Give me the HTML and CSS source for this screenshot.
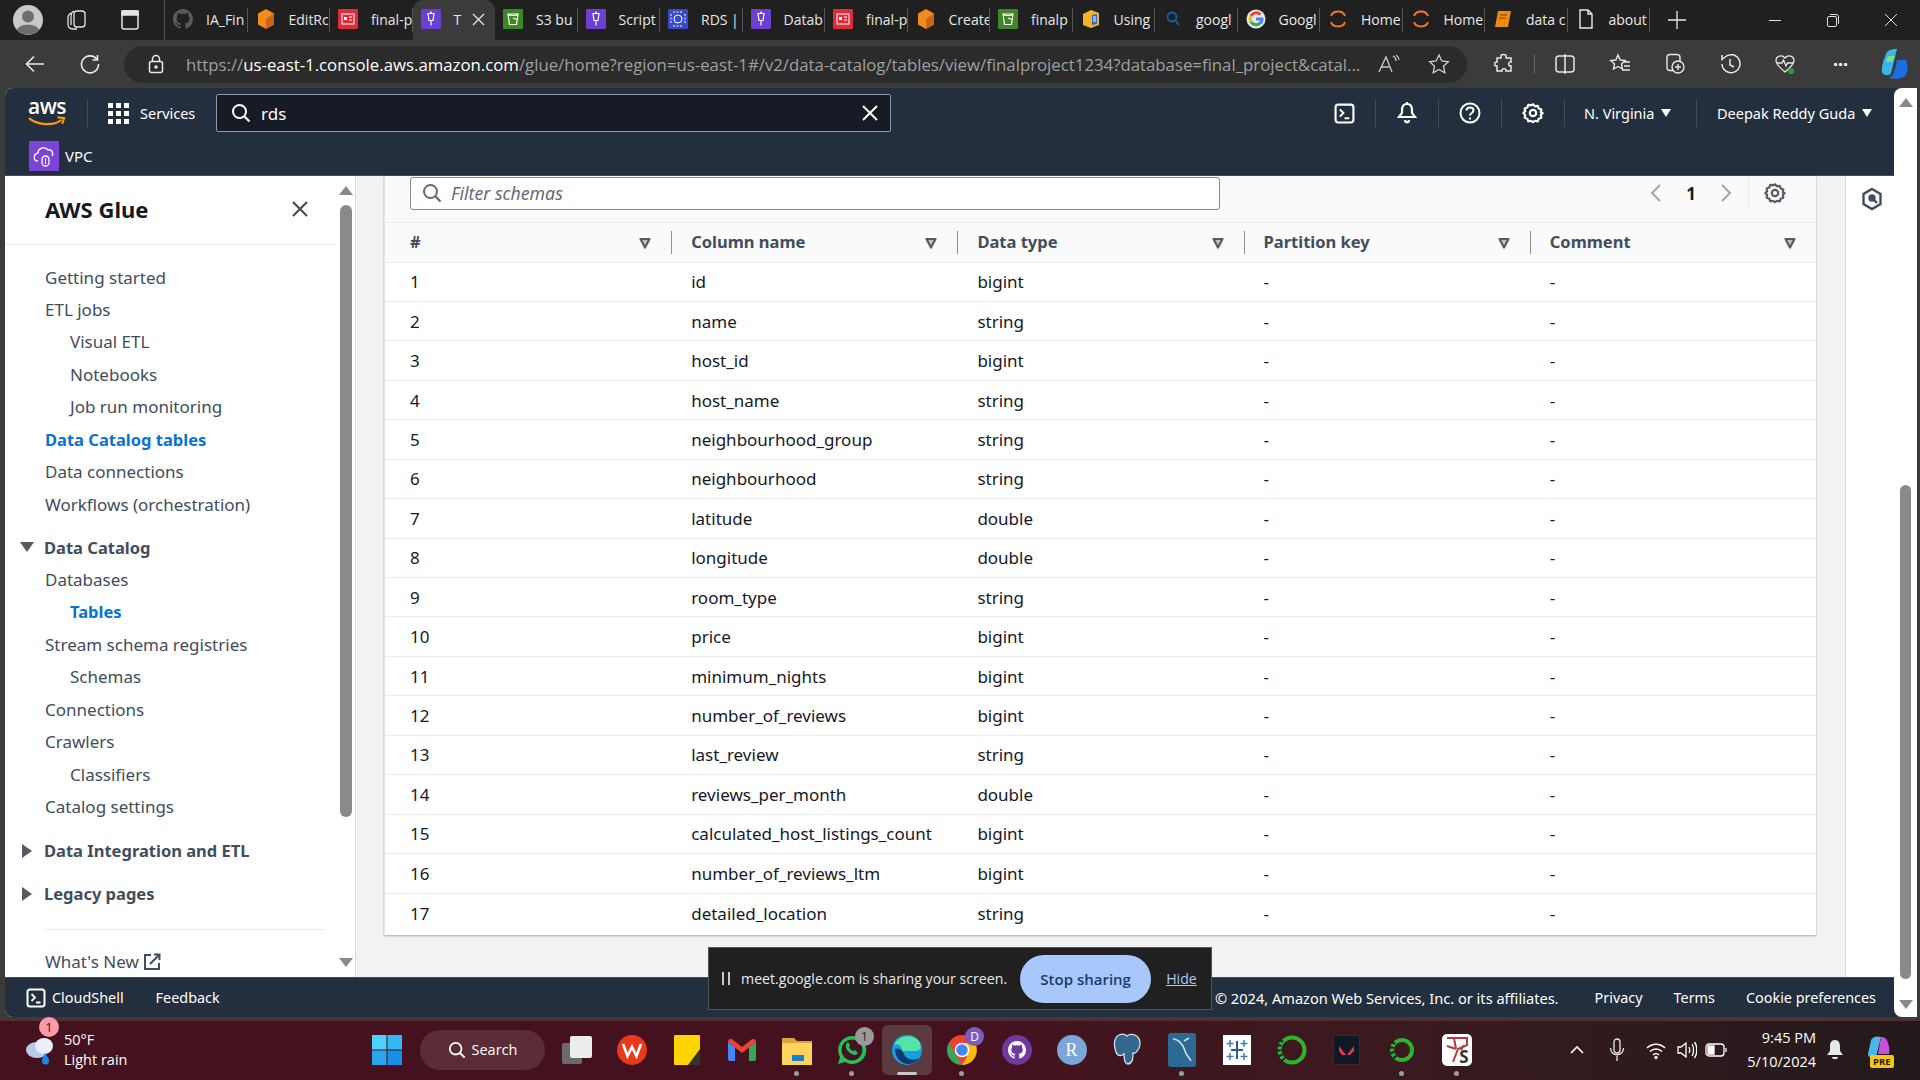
FILE: index.html
```html
<!DOCTYPE html>
<html lang="en">
<head>
<meta charset="utf-8">
<title>AWS Glue</title>
<link rel="stylesheet" href="styles.css">
</head>
<body>
<svg class="sprite" width="0" height="0">
  <symbol id="gh" viewBox="0 0 16 16"><path fill="currentColor" d="M8 0C3.58 0 0 3.58 0 8c0 3.54 2.29 6.53 5.47 7.59.4.07.55-.17.55-.38 0-.19-.01-.82-.01-1.49-2.01.37-2.53-.49-2.69-.94-.09-.23-.48-.94-.82-1.13-.28-.15-.68-.52-.01-.53.63-.01 1.08.58 1.23.82.72 1.21 1.87.87 2.33.66.07-.52.28-.87.51-1.07-1.78-.2-3.64-.89-3.64-3.95 0-.87.31-1.59.82-2.15-.08-.2-.36-1.02.08-2.12 0 0 .67-.21 2.2.82.64-.18 1.32-.27 2-.27s1.36.09 2 .27c1.53-1.04 2.2-.82 2.2-.82.44 1.1.16 1.92.08 2.12.51.56.82 1.27.82 2.15 0 3.07-1.87 3.75-3.65 3.95.29.25.54.73.54 1.48 0 1.07-.01 1.93-.01 2.2 0 .21.15.46.55.38A8.013 8.013 0 0016 8c0-4.42-3.58-8-8-8z"/></symbol>
  <symbol id="cube" viewBox="0 0 20 20"><path fill="#f58a1f" d="M10 0l8 4.5v11L10 20l-8-4.5v-11z"/><path fill="#c9661a" d="M10 10l8-5.5v11L10 20z"/></symbol>
  <symbol id="red" viewBox="0 0 20 20"><rect width="20" height="20" rx="1" fill="#dd2c3b"/><rect x="4" y="5" width="12" height="10" fill="none" stroke="#fff" stroke-width="1"/><rect x="6" y="8" width="3" height="3" fill="#fff"/><path stroke="#fff" d="M11 8h3M11 11h3"/></symbol>
  <symbol id="glue" viewBox="0 0 20 20"><rect width="20" height="20" rx="1" fill="#6b3fd0"/><path fill="none" stroke="#fff" stroke-width="1.2" d="M7 4.500h6l-1 7h-4zM10 11.500v5"/><circle cx="10" cy="3.500" r="1" fill="#fff"/></symbol>
  <symbol id="s3" viewBox="0 0 20 20"><rect width="20" height="20" rx="1" fill="#3f8624"/><path fill="none" stroke="#fff" stroke-width="1.2" d="M5 5h10l-1.500 10.500h-7zM5 5c1 2 9 2 10 0M10 9l5 2"/></symbol>
  <symbol id="rds" viewBox="0 0 20 20"><rect width="20" height="20" rx="1" fill="#3b48cc"/><circle cx="10" cy="10" r="4" fill="none" stroke="#fff"/><path fill="none" stroke="#fff" stroke-dasharray="2 1.500" d="M3 5v10M17 5v10M5 3h10M5 17h10"/></symbol>
  <symbol id="book" viewBox="0 0 20 20"><path fill="#f5b324" d="M2 5l8-4 8 3v12l-8 3-8-3z"/><path fill="#2c6fc2" d="M11 6l5-1v10l-5 1z"/><path stroke="#fff" d="M12 8h3M12 10h3M12 12h3"/></symbol>
  <symbol id="glass" viewBox="0 0 20 20"><circle cx="9" cy="8" r="4.500" fill="none" stroke="#1d5fa8" stroke-width="1.800"/><path stroke="#1d5fa8" stroke-width="1.800" d="M12 11l4 5"/></symbol>
  <symbol id="goog" viewBox="0 0 20 20"><circle cx="10" cy="10" r="9.500" fill="#e8e8e8"/><path fill="none" stroke-width="3" stroke="#ea4335" d="M5 7a6 6 0 0 1 9.500-1.500"/><path fill="none" stroke-width="3" stroke="#fbbc05" d="M5 7a6 6 0 0 0 0 6"/><path fill="none" stroke-width="3" stroke="#34a853" d="M5 13a6 6 0 0 0 10 0"/><path fill="none" stroke-width="3" stroke="#4285f4" d="M15 14a6 6 0 0 0 1-4h-6"/></symbol>
  <symbol id="jup" viewBox="0 0 20 20"><path fill="none" stroke="#f37726" stroke-width="2" d="M3 7c2-6 12-6 14 0M3 13c2 6 12 6 14 0"/></symbol>
  <symbol id="odoc" viewBox="0 0 20 20"><path fill="#f08a0c" d="M5 2h13l-3 16H2z"/><path stroke="#7a3f00" stroke-width="1" d="M7 6h7M6 9h7"/></symbol>
  <symbol id="doc" viewBox="0 0 20 20"><path fill="none" stroke="#e8e8e8" stroke-width="1.400" d="M4 1h8l4 4v14H4zM12 1v4h4"/></symbol>
  <symbol id="gear" viewBox="0 0 24 24"><path fill="none" stroke="currentColor" stroke-width="2.400" d="M12 2.500l2.200 2.200 3-.6 1 3 2.900 1-.6 3 2 .9-2 2.200.6 3-2.900 1-1 2.900-3-.6L12 22l-2.200-1.500-3 .6-1-2.900-2.900-1 .6-3L1.500 12l2-2-.6-3 2.900-1 1-2.900 3 .6z" stroke-linejoin="round"/><circle cx="12" cy="12" r="3.500" fill="none" stroke="currentColor" stroke-width="2.400"/></symbol>
  <symbol id="mag" viewBox="0 0 20 20"><circle cx="8.500" cy="8.500" r="6.500" fill="none" stroke="currentColor" stroke-width="2"/><path stroke="currentColor" stroke-width="2.200" d="M13 13l5.500 5.500"/></symbol>
  <symbol id="tri" viewBox="0 0 14 14"><path fill="#bcc3cc" stroke="currentColor" stroke-width="2.200" d="M2.500 3h9L7 11.500z" stroke-linejoin="round"/></symbol>
  <symbol id="shell" viewBox="0 0 20 20"><rect x="1.500" y="1.500" width="17" height="17" rx="2.500" fill="none" stroke="currentColor" stroke-width="2"/><path fill="none" stroke="currentColor" stroke-width="1.800" d="M5.500 6l3.500 3.500L5.500 13M10 14.500h4.500"/></symbol>
</svg>

<header class="tabbar">
  <div class="profile"><svg width="30" height="30" viewBox="0 0 30 30"><circle cx="15" cy="15" r="15" fill="#c9c9c9"/><circle cx="15" cy="11.500" r="6" fill="#6e6e6e"/><path fill="#6e6e6e" d="M4 25c2-7 20-7 22 0a15 15 0 0 1-22 0z"/></svg></div>
  <div class="tbtn"><svg width="24" height="24" viewBox="0 0 24 24" fill="none" stroke="#e4e4e4" stroke-width="1.300"><rect x="9" y="3" width="11" height="16" rx="3"/><path d="M6 5c-2 1-3 3-3 5v6c0 3 2 5 5 5h4M9 3C6 4 6 7 6 9v8"/></svg></div>
  <div class="tbtn wide"><svg width="22" height="22" viewBox="0 0 22 22" fill="none" stroke="#e4e4e4" stroke-width="1.500"><rect x="3" y="2" width="16" height="18" rx="2"/><path fill="#e4e4e4" d="M3 2h16v4H3z"/></svg></div>
  <nav class="tabs">
    <div class="tab"><svg class="ti gh" width="20" height="20"><use href="#gh"/></svg><span>IA_Fin</span></div>
    <div class="tab"><svg class="ti" width="20" height="20"><use href="#cube"/></svg><span>EditRc</span></div>
    <div class="tab"><svg class="ti" width="20" height="20"><use href="#red"/></svg><span>final-p</span></div>
    <div class="tab active"><svg class="ti" width="20" height="20"><use href="#glue"/></svg><span>T</span><svg class="tx" width="13" height="13" viewBox="0 0 13 13" stroke="#e8e8e8" stroke-width="1.300"><path d="M1 1l11 11M12 1L1 12"/></svg></div>
    <div class="tab"><svg class="ti" width="20" height="20"><use href="#s3"/></svg><span>S3 bu</span></div>
    <div class="tab"><svg class="ti" width="20" height="20"><use href="#glue"/></svg><span>Script</span></div>
    <div class="tab"><svg class="ti" width="20" height="20"><use href="#rds"/></svg><span>RDS |</span></div>
    <div class="tab"><svg class="ti" width="20" height="20"><use href="#glue"/></svg><span>Datab</span></div>
    <div class="tab"><svg class="ti" width="20" height="20"><use href="#red"/></svg><span>final-p</span></div>
    <div class="tab"><svg class="ti" width="20" height="20"><use href="#cube"/></svg><span>Create</span></div>
    <div class="tab"><svg class="ti" width="20" height="20"><use href="#s3"/></svg><span>finalp</span></div>
    <div class="tab"><svg class="ti" width="20" height="20"><use href="#book"/></svg><span>Using</span></div>
    <div class="tab"><svg class="ti" width="20" height="20"><use href="#glass"/></svg><span>googl</span></div>
    <div class="tab"><svg class="ti" width="20" height="20"><use href="#goog"/></svg><span>Googl</span></div>
    <div class="tab"><svg class="ti" width="20" height="20"><use href="#jup"/></svg><span>Home</span></div>
    <div class="tab"><svg class="ti" width="20" height="20"><use href="#jup"/></svg><span>Home</span></div>
    <div class="tab"><svg class="ti" width="20" height="20"><use href="#odoc"/></svg><span>data c</span></div>
    <div class="tab"><svg class="ti" width="20" height="20"><use href="#doc"/></svg><span>about</span></div>
  </nav>
  <div class="newtab"><svg width="20" height="20" viewBox="0 0 20 20" stroke="#e8e8e8" stroke-width="1.300"><path d="M10 1v18M1 10h18"/></svg></div>
  <div class="winctl">
    <svg width="14" height="14" viewBox="0 0 14 14" stroke="#e0e0e0"><path d="M1 7.500h12"/></svg>
    <svg width="14" height="14" viewBox="0 0 14 14" stroke="#e0e0e0" fill="none"><rect x="1.500" y="3.500" width="9" height="10" rx="1.500"/><path d="M4 1.500h6c2 0 2.500 1 2.500 2.500v7"/></svg>
    <svg width="14" height="14" viewBox="0 0 14 14" stroke="#e0e0e0"><path d="M1 1l12 12M13 1L1 13"/></svg>
  </div>
</header>

<div class="toolbar">
  <div class="navb first"><svg width="22" height="22" viewBox="0 0 22 22" fill="none" stroke="#e8e8e8" stroke-width="1.600"><path d="M20 11H3M10 3.500L2.500 11l7.500 7.500"/></svg></div>
  <div class="navb"><svg width="22" height="22" viewBox="0 0 22 22" fill="none" stroke="#e8e8e8" stroke-width="1.600"><path d="M18 6.500A8.500 8.500 0 1 0 19.500 11M18.500 2v5h-5"/></svg></div>
  <div class="omni">
    <svg class="lock" width="16" height="20" viewBox="0 0 16 20" fill="none" stroke="#e8e8e8" stroke-width="1.500"><rect x="1.500" y="7.500" width="13" height="11" rx="2"/><path d="M4.500 7.500V5a3.500 3.500 0 0 1 7 0v2.500"/><circle cx="8" cy="13" r="1" fill="#e8e8e8"/></svg>
    <div class="url"><span class="dim">https://</span>us-east-1.console.aws.amazon.com<span class="dim">/glue/home?region=us-east-1#/v2/data-catalog/tables/view/finalproject1234?database=final_project&amp;catal...</span></div>
    <svg class="readaloud" width="24" height="20" viewBox="0 0 24 20" fill="none" stroke="#c8c8c8" stroke-width="1.300"><path d="M1 18L8 3l6 15M3.500 13h8.500M15 2c2 1 3 3 3 5M18 1c2 1.500 3 3 3 5"/></svg>
    <svg class="star" width="22" height="22" viewBox="0 0 22 22" fill="none" stroke="#d0d0d0" stroke-width="1.300"><path d="M11 2l2.800 6 6.500.8-4.800 4.400 1.300 6.500L11 16.500l-5.800 3.200 1.300-6.500L1.700 8.800 8.200 8z"/></svg>
  </div>
  <div class="tools">
    <svg width="22" height="22" viewBox="0 0 22 22" fill="none" stroke="#e8e8e8" stroke-width="1.500"><path d="M8 3c0-2 5-2 5 0v2h5v4c-3-1-3 5 0 4v5h-5c1-3-5-3-4 0H4v-5c-3 1-3-5 0-4V5h4z"/></svg>
    <span class="toolsep"></span>
    <svg width="22" height="22" viewBox="0 0 22 22" fill="none" stroke="#e8e8e8" stroke-width="1.500"><rect x="2" y="3" width="18" height="16" rx="3"/><path d="M11 1v20"/></svg>
    <svg width="22" height="22" viewBox="0 0 22 22" fill="none" stroke="#e8e8e8" stroke-width="1.400"><path d="M9 2l2.200 5 5 .6-3.700 3.400 1 5L9 13.500 4.500 16l1-5L1.800 7.600l5-.6zM15 9h6M15 13h6M13 17h8"/></svg>
    <svg width="22" height="22" viewBox="0 0 22 22" fill="none" stroke="#e8e8e8" stroke-width="1.400"><rect x="3" y="1.500" width="13" height="16" rx="3"/><circle cx="14" cy="14" r="6" fill="#3b3b3b"/><path d="M14 11v6M11 14h6"/></svg>
    <svg width="22" height="22" viewBox="0 0 22 22" fill="none" stroke="#e8e8e8" stroke-width="1.500"><path d="M3 11a9 9 0 1 0 3-7L3 6.500V2M11 6v6l4 2"/></svg>
    <svg width="22" height="22" viewBox="0 0 22 22" fill="none" stroke="#e8e8e8" stroke-width="1.300"><path d="M11 19C5 14 2 11 2 7.500 2 3 8 1 11 5c3-4 9-2 9 2.500 0 3.500-3 6.500-9 11.500zM3 10h5l1.500-3 2.500 6 1.500-3H19"/><circle cx="17" cy="18" r="3" fill="#2c9a3f" stroke="none"/></svg>
    <span class="dots">···</span>
    <svg class="copilot" width="30" height="32" viewBox="0 0 30 32"><path fill="#38b6e8" d="M6 6c2-5 8-5 11-5l-6 24c-1 3-8 3-9-1-1-5 2-13 4-18z"/><path fill="#1a6fe0" d="M17 12h9c3 6 2 16-4 18-4 1-10 1-13 0 5-1 7-12 8-18z"/><path fill="#7bdc8a" d="M8 8h7l-3 6H6z"/></svg>
  </div>
</div>

<div class="shell">
  <div class="page">
    <div class="awshead">
      <div class="headrow">
        <div class="awslogo">
          <span class="awsword">aws</span>
          <svg class="smile" width="40" height="10" viewBox="0 0 40 10" fill="none" stroke="#ff9900" stroke-width="2.200"><path d="M1 2c10 8 26 8 34 2M31 1l7 1-2 6"/></svg>
        </div>
        <span class="hsep first"></span>
        <div class="services">
          <svg class="grid" width="21" height="21" viewBox="0 0 21 21" fill="#fff"><rect width="5" height="5"/><rect x="8" width="5" height="5"/><rect x="16" width="5" height="5"/><rect y="8" width="5" height="5"/><rect x="8" y="8" width="5" height="5"/><rect x="16" y="8" width="5" height="5"/><rect y="16" width="5" height="5"/><rect x="8" y="16" width="5" height="5"/><rect x="16" y="16" width="5" height="5"/></svg>
          <span>Services</span>
        </div>
        <div class="search">
          <svg class="searchmag" width="20" height="20"><use href="#mag"/></svg>
          <span class="q">rds</span>
          <svg class="searchx" width="16" height="16" viewBox="0 0 16 16" stroke="#fff" stroke-width="2"><path d="M1 1l14 14M15 1L1 15"/></svg>
        </div>
        <div class="headright">
          <span class="hicon"><svg width="21" height="21"><use href="#shell"/></svg></span>
          <span class="hsep"></span>
          <span class="hicon"><svg width="22" height="24" viewBox="0 0 22 24" fill="none" stroke="#fff" stroke-width="2.200"><path d="M11 3c-4 0-5 3-5 6v3l-3 4h16l-3-4V9c0-3-1-6-5-6zM11 1v2M9 19c0 3 4 3 4 0"/></svg></span>
          <span class="hsep"></span>
          <span class="hicon"><svg width="22" height="22" viewBox="0 0 22 22" fill="none" stroke="#fff" stroke-width="2"><circle cx="11" cy="11" r="9.500"/><path d="M7.500 8.500c0-4 7-4 7 0 0 2.500-3.500 2.500-3.500 5"/><path d="M11 15.500v2"/></svg></span>
          <span class="hsep"></span>
          <span class="hicon"><svg width="22" height="22"><use href="#gear"/></svg></span>
          <span class="hsep"></span>
          <span class="hmenu region">N. Virginia<i class="caret"></i></span>
          <span class="hsep"></span>
          <span class="hmenu user">Deepak Reddy Guda<i class="caret"></i></span>
        </div>
      </div>
      <div class="favrow">
        <svg width="30" height="30" viewBox="0 0 30 30"><rect width="30" height="30" fill="#7b43d6"/><path fill="none" stroke="#fff" stroke-width="1.300" d="M9 20c-5 0-5-7 0-8 0-5 7-7 10-3 3-1 6 2 4 6"/><rect x="13" y="15" width="7" height="10" rx="3.500" fill="none" stroke="#fff" stroke-width="1.300"/><path stroke="#fff" d="M16.500 17v6"/></svg>
        <span>VPC</span>
      </div>
    </div>

    <div class="body">
      <aside class="side">
        <div class="sidecol">
          <div class="sidetitle"><h2>AWS Glue</h2><svg width="16" height="16" viewBox="0 0 16 16" stroke="#414d5c" stroke-width="2.200"><path d="M1 1l14 14M15 1L1 15"/></svg></div>
          <ul class="nav top">
            <li>Getting started</li>
            <li>ETL jobs</li>
            <li class="sub">Visual ETL</li>
            <li class="sub">Notebooks</li>
            <li class="sub">Job run monitoring</li>
            <li class="on">Data Catalog tables</li>
            <li>Data connections</li>
            <li>Workflows (orchestration)</li>
          </ul>
          <div class="group"><i class="dn"></i>Data Catalog</div>
          <ul class="nav">
            <li>Databases</li>
            <li class="sub on">Tables</li>
            <li>Stream schema registries</li>
            <li class="sub">Schemas</li>
            <li>Connections</li>
            <li>Crawlers</li>
            <li class="sub">Classifiers</li>
            <li>Catalog settings</li>
          </ul>
          <div class="group g2"><i class="rt"></i>Data Integration and ETL</div>
          <div class="group g3"><i class="rt"></i>Legacy pages</div>
          <div class="siderule"></div>
          <div class="whatsnew">What's New <svg width="18" height="18" viewBox="0 0 18 18" fill="none" stroke="#414d5c" stroke-width="2"><path d="M8 2H2v14h14v-6M7 11l9-9M11 1.500h5.500V7"/></svg></div>
        </div>
        <div class="sidebar-scroll">
          <i class="up"></i>
          <div class="track"><div class="thumb"></div></div>
          <i class="down"></i>
        </div>
      </aside>

      <main class="content">
        <section class="card">
          <div class="cardtop">
            <div class="filter"><svg width="20" height="20"><use href="#mag"/></svg><span>Filter schemas</span></div>
            <div class="pager">
              <svg width="12" height="20" viewBox="0 0 12 20" fill="none" stroke="#9ba7b6" stroke-width="2"><path d="M10 2l-8 8 8 8"/></svg>
              <b>1</b>
              <svg width="12" height="20" viewBox="0 0 12 20" fill="none" stroke="#9ba7b6" stroke-width="2"><path d="M2 2l8 8-8 8"/></svg>
            </div>
            <div class="prefs"><svg width="22" height="22"><use href="#gear"/></svg></div>
          </div>
          <table class="grid-table">
            <thead>
              <tr>
                <th><span>#</span><svg width="14" height="14"><use href="#tri"/></svg></th>
                <th><span>Column name</span><svg width="14" height="14"><use href="#tri"/></svg></th>
                <th><span>Data type</span><svg width="14" height="14"><use href="#tri"/></svg></th>
                <th><span>Partition key</span><svg width="14" height="14"><use href="#tri"/></svg></th>
                <th><span>Comment</span><svg width="14" height="14"><use href="#tri"/></svg></th>
              </tr>
            </thead>
            <tbody>
              <tr><td>1</td><td>id</td><td>bigint</td><td>-</td><td>-</td></tr>
              <tr><td>2</td><td>name</td><td>string</td><td>-</td><td>-</td></tr>
              <tr><td>3</td><td>host_id</td><td>bigint</td><td>-</td><td>-</td></tr>
              <tr><td>4</td><td>host_name</td><td>string</td><td>-</td><td>-</td></tr>
              <tr><td>5</td><td>neighbourhood_group</td><td>string</td><td>-</td><td>-</td></tr>
              <tr><td>6</td><td>neighbourhood</td><td>string</td><td>-</td><td>-</td></tr>
              <tr><td>7</td><td>latitude</td><td>double</td><td>-</td><td>-</td></tr>
              <tr><td>8</td><td>longitude</td><td>double</td><td>-</td><td>-</td></tr>
              <tr><td>9</td><td>room_type</td><td>string</td><td>-</td><td>-</td></tr>
              <tr><td>10</td><td>price</td><td>bigint</td><td>-</td><td>-</td></tr>
              <tr><td>11</td><td>minimum_nights</td><td>bigint</td><td>-</td><td>-</td></tr>
              <tr><td>12</td><td>number_of_reviews</td><td>bigint</td><td>-</td><td>-</td></tr>
              <tr><td>13</td><td>last_review</td><td>string</td><td>-</td><td>-</td></tr>
              <tr><td>14</td><td>reviews_per_month</td><td>double</td><td>-</td><td>-</td></tr>
              <tr><td>15</td><td>calculated_host_listings_count</td><td>bigint</td><td>-</td><td>-</td></tr>
              <tr><td>16</td><td>number_of_reviews_ltm</td><td>bigint</td><td>-</td><td>-</td></tr>
              <tr><td>17</td><td>detailed_location</td><td>string</td><td>-</td><td>-</td></tr>
            </tbody>
          </table>
        </section>
      </main>

      <aside class="toolspanel"><svg width="22" height="24" viewBox="0 0 22 24" fill="none" stroke="#414d5c" stroke-width="2.400"><path d="M11 2l8.500 5v10L11 22l-8.500-5V7z"/><circle cx="11" cy="11" r="2.500" fill="#414d5c"/><path d="M13 13l3 3"/></svg></aside>
    </div>

    <footer class="foot">
      <div class="footleft"><svg width="20" height="20"><use href="#shell"/></svg><span>CloudShell</span><span class="fb">Feedback</span></div>
      <div class="footright"><span class="copy">© 2024, Amazon Web Services, Inc. or its affiliates.</span><span>Privacy</span><span>Terms</span><span>Cookie preferences</span></div>
    </footer>
  </div>
  <div class="pagebar">
    <i class="up"></i>
    <div class="pagetrack"><div class="pagethumb"></div></div>
    <i class="down"></i>
  </div>
</div>

<div class="meet">
  <span class="pause"></span>
  <span class="meettext">meet.google.com is sharing your screen.</span>
  <span class="stop">Stop sharing</span>
  <a class="hide">Hide</a>
</div>

<footer class="taskbar">
  <div class="weather">
    <svg width="32" height="34" viewBox="0 0 32 34"><ellipse cx="13" cy="17" rx="11" ry="8" fill="#b9c9ea"/><ellipse cx="20" cy="13" rx="9" ry="8" fill="#e9eef8"/><path fill="#1e88e5" d="M21 20c3 4 4 6 4 8a3.500 3.500 0 0 1-7 0c0-2 1-4 3-8z"/></svg>
    <span class="wbadge">1</span>
    <div class="wtext"><span>50°F</span><span>Light rain</span></div>
  </div>
  <div class="center">
    <svg class="start" width="30" height="30" viewBox="0 0 30 30"><rect width="14.500" height="14.500" fill="#4fd0f8"/><rect x="15.500" width="14.500" height="14.500" fill="#33b9f4"/><rect y="15.500" width="14.500" height="14.500" fill="#2ba6ee"/><rect x="15.500" y="15.500" width="14.500" height="14.500" fill="#1a8fe6"/></svg>
    <div class="tsearch"><svg width="18" height="18"><use href="#mag"/></svg><span>Search</span></div>
    <div class="ticon"><svg width="32" height="30" viewBox="0 0 32 30"><rect x="1" y="8" width="20" height="21" rx="2" fill="#6b6b6b"/><rect x="9" y="1" width="22" height="22" rx="2" fill="#ececec"/></svg></div>
    <div class="ticon"><svg width="30" height="30" viewBox="0 0 30 30"><circle cx="15" cy="15" r="15" fill="#e8391d"/><path fill="none" stroke="#fff" stroke-width="2.600" d="M6 9l4.500 12L15 12l4.500 9L24 9"/></svg></div>
    <div class="ticon"><svg width="26" height="30" viewBox="0 0 26 30"><rect width="26" height="30" rx="1" fill="#ffd400"/><path fill="#333" d="M26 14v16H14z"/></svg></div>
    <div class="ticon"><svg width="28" height="22" viewBox="0 0 28 22"><path fill="#4285f4" d="M0 3l7 5v14H2a2 2 0 0 1-2-2z"/><path fill="#34a853" d="M28 3l-7 5v14h5a2 2 0 0 0 2-2z"/><path fill="#ea4335" d="M0 3c0-3 3-4 5-2l9 7 9-7c2-2 5-1 5 2l-14 11z"/></svg></div>
    <div class="ticon dot"><svg width="30" height="30" viewBox="0 0 30 30"><path fill="#e0a23a" d="M0 3h12l3 3h15v24H0z"/><path fill="#ffd35c" d="M0 8h30v22H0z"/><rect x="10" y="20" width="12" height="6" fill="#1a7fd1"/></svg></div>
    <div class="ticon dot"><svg width="30" height="30" viewBox="0 0 30 30"><path fill="#25c05a" d="M15 1a14 14 0 0 0-12 21L1 29l7-2A14 14 0 1 0 15 1z"/><circle cx="15" cy="15" r="10.500" fill="#421420"/><path fill="#25c05a" d="M10 8c-3 3 0 8 3 10s6 3 8 0l-3-3-2 1c-2-1-3-2-4-4l1-2-2-3z"/></svg><span class="tcount">1</span></div>
    <div class="ticon activeapp"><svg width="30" height="30" viewBox="0 0 30 30"><circle cx="15" cy="15" r="15" fill="#1b9de2"/><path fill="#50e6a5" d="M2 10C6 1 20-2 27 6c3 4 2 10-3 10H10C10 10 6 8 2 10z"/><path fill="#0f3a6e" d="M3 14c0 9 7 16 15 15 4-.5 7-3 9-6-5 3-13 2-15-4-1-3-5-7-9-5z"/></svg></div>
    <div class="ticon dot"><svg width="30" height="30" viewBox="0 0 30 30"><circle cx="15" cy="15" r="15" fill="#ea4335"/><path fill="#34a853" d="M15 30A15 15 0 0 1 2 8l8 14z"/><path fill="#fbbc05" d="M15 30a15 15 0 0 0 13-22H15l5 14z"/><circle cx="15" cy="15" r="6.500" fill="#4285f4" stroke="#fff" stroke-width="1.500"/></svg><span class="tcount d">D</span></div>
    <div class="ticon"><svg width="30" height="30" viewBox="0 0 30 30"><circle cx="15" cy="15" r="15" fill="#6f3a9e"/><svg x="6" y="6" width="18" height="18" color="#fff"><use href="#gh"/></svg></svg></div>
    <div class="ticon"><span class="rball">R</span></div>
    <div class="ticon"><svg width="30" height="34" viewBox="0 0 30 34"><path fill="#34668f" stroke="#d5dfe8" stroke-width="1.300" d="M7 2c5-2 7 0 8 1 2-2 5-2 8-1 5 2 6 8 4 13-2 4-4 6-6 5 0 5 0 10-5 11-3 0-4-4-4-10-2 2-6 3-8-2C2 14 1 5 7 2z"/></svg></div>
    <div class="ticon dot"><svg width="28" height="34" viewBox="0 0 28 34"><rect width="28" height="34" rx="3" fill="#2d6a93"/><path fill="none" stroke="#cfe0ea" stroke-width="1.500" d="M5 6c5 0 10 5 12 12 1 4 4 6 6 10M16 8l5-3"/></svg></div>
    <div class="ticon"><svg width="28" height="30" viewBox="0 0 28 30"><rect width="28" height="30" fill="#fff"/><path stroke="#1f5f9c" stroke-width="2" d="M14 6v18M8 15h12"/><path stroke="#3f7fb4" stroke-width="1.500" d="M7 5v7M3.500 8.500h7M21 5v7M17.500 8.500h7M7 18v7M3.500 21.500h7M21 18v7M17.500 21.500h7"/></svg></div>
    <div class="ticon"><svg width="30" height="30" viewBox="0 0 30 30" fill="none"><circle cx="15" cy="15" r="12.500" stroke="#2fb32c" stroke-width="4"/><path stroke="#123" stroke-width="4" stroke-dasharray="2 3" d="M5 5c-5 7-3 16 3 21"/></svg></div>
    <div class="ticon"><svg width="27" height="30" viewBox="0 0 27 30"><rect width="27" height="30" fill="#0f1923" stroke="#7e2636"/><path fill="#e8394b" d="M6 11l7 9H9l-3-4zM21 11v5l-4 4h-3z"/></svg></div>
    <div class="ticon dot"><svg width="26" height="30" viewBox="0 0 26 30" fill="none"><circle cx="13" cy="15" r="10" stroke="#2fb32c" stroke-width="4"/><path stroke="#123" stroke-width="4" stroke-dasharray="2 3" d="M5 7c-4 6-2 12 2 16"/></svg></div>
    <div class="ticon dot"><span class="ks"><svg width="30" height="32" viewBox="0 0 30 32" fill="none" stroke="#b33a3a" stroke-width="2"><path d="M5 4h20v7l-9 4-5 13M5 12l9 3M12 4l2 11M22 11l-3 5"/></svg><b>S</b></span></div>
  </div>
  <div class="tray">
    <svg class="chev" width="14" height="10" viewBox="0 0 14 10" fill="none" stroke="#fff" stroke-width="1.600"><path d="M1 8l6-6 6 6"/></svg>
    <svg class="mic" width="16" height="24" viewBox="0 0 16 24" fill="none" stroke="#e8e8e8" stroke-width="1.300"><rect x="5" y="1" width="6" height="14" rx="3"/><path d="M1.500 10c0 9 13 9 13 0M8 18v5"/></svg>
    <svg class="wifi" width="20" height="20" viewBox="0 0 20 20" fill="none" stroke="#fff" stroke-width="1.500"><path d="M1 8c5-5 13-5 18 0M4 11.500c3.500-3.500 8.500-3.500 12 0M7 15c2-2 4-2 6 0"/><circle cx="10" cy="17.500" r="1" fill="#fff"/></svg>
    <svg class="vol" width="20" height="20" viewBox="0 0 20 20" fill="none" stroke="#fff" stroke-width="1.300"><path d="M1 7v6h3l5 4V3L4 7zM12 7c1 2 1 4 0 6M15 4c2 3 2 9 0 12M17.500 2c3 4 3 12 0 16"/></svg>
    <svg class="bat" width="22" height="16" viewBox="0 0 22 16" fill="none" stroke="#fff" stroke-width="1.300"><rect x="1" y="2" width="18" height="12" rx="3"/><path fill="#fff" d="M3 4h6v8H3z"/><path d="M21 6v4"/></svg>
    <div class="clock"><span>9:45 PM</span><span>5/10/2024</span></div>
    <svg class="tbell" width="18" height="22" viewBox="0 0 18 22" fill="#e8e8e8"><path d="M9 1C5 1 4 4 4 8v4l-3 4h16l-3-4V8c0-4-1-7-5-7z"/><path d="M6 18c0 3 6 3 6 0z"/></svg>
    <div class="copre"><svg width="30" height="28" viewBox="0 0 30 28"><path fill="#46b8e8" d="M7 4c2-4 7-4 10-3l-5 20c-2 3-8 1-8-3z"/><path fill="#c64fdc" d="M17 1c4 0 6 2 7 6 1 3 2 8 1 11H14z"/></svg><b>PRE</b></div>
  </div>
</footer>
</body>
</html>
```
FILE: styles.css
```css
* { box-sizing: border-box; }
html, body { margin: 0; padding: 0; }
body {
  width: 1920px;
  height: 1080px;
  overflow: hidden;
  display: flex;
  flex-direction: column;
  position: relative;
  background: #3b3b3b;
  font-family: "Noto Sans", "Open Sans", sans-serif;
  font-size: 17px;
  color: #16191f;
}
.sprite { position: absolute; }
svg { flex: none; display: block; }
i { font-style: normal; }
ul { list-style: none; margin: 0; padding: 0; }

/* Browser tab strip */
.tabbar {
  height: 40px;
  flex: none;
  display: flex;
  align-items: center;
  background: #202020;
  color: #e8e8e8;
  font-family: "Open Sans", "Noto Sans", sans-serif;
  font-size: 14px;
}
.profile { width: 52px; padding-left: 13px; }
.tbtn { width: 50px; display: flex; justify-content: center; }
.tbtn.wide { width: 62px; padding-right: 6px; }
.tabs { display: flex; height: 40px; border-left: 1px solid #555; background-clip: padding-box; }
.tab {
  width: 82.500px;
  height: 40px;
  display: flex;
  align-items: center;
  padding: 0 0 2px 8px;
  overflow: hidden;
  white-space: nowrap;
  position: relative;
}
.tab::after { content: ""; position: absolute; right: 0; top: 8px; bottom: 8px; width: 1px; background: #555; }
.tab span { margin-left: 13px; width: 41px; flex: none; }
.tab.active { background: #3b3b3b; border-radius: 10px 10px 0 0; }
.tab.active::after { display: none; }
.tab.active span { width: 12px; }
.tx { margin-left: 6px; }
.gh { color: #5a5a5a; }
.newtab { margin-left: 17px; }
.winctl { margin-left: auto; display: flex; gap: 44px; padding-right: 22px; }

/* Browser toolbar */
.toolbar {
  height: 48px;
  flex: none;
  display: flex;
  align-items: center;
  background: #3b3b3b;
  padding-left: 24px;
}
.navb { width: 55px; }
.omni {
  margin-left: -10px;
  width: 1343px;
  height: 37px;
  border-radius: 19px;
  background: #2b2b2b;
  display: flex;
  align-items: center;
  padding-left: 24px;
  color: #fff;
}
.url {
  margin-left: 22px;
  width: 1175px;
  white-space: nowrap;
  overflow: hidden;
  font-family: "Open Sans", sans-serif;
  font-size: 16.800px;
  color: #fff;
}
.dim { color: #a0a0a0; }
.readaloud { margin-left: 17px; }
.star { margin-left: 26px; }
.tools { display: flex; align-items: center; margin-left: 26px; }
.tools svg { margin-right: 33px; }
.toolsep { width: 1px; height: 20px; background: #666; margin: 0 19px 0 -14px; }
.dots { color: #fff; margin: 0 32px 0 4px; font-size: 18px; font-weight: 700; line-height: 1; }
.tools .copilot { margin: 0; }

/* Page shell */
.shell { flex: none; height: 932px; display: flex; padding-left: 5px; }
.page {
  width: 1892px;
  height: 929px;
  display: flex;
  flex-direction: column;
  border-radius: 8px 0 0 8px;
  overflow: hidden;
  background: #f2f3f3;
}
.awshead { height: 88px; flex: none; background: #232f3e; color: #fff; border-bottom: 1px solid #414d5c; font-size: 14.500px; }
.headrow { height: 50px; display: flex; align-items: center; padding-left: 23px; }
.awslogo { width: 38px; height: 30px; position: relative; }
.awsword { display: block; font-family: "Open Sans", sans-serif; font-weight: 600; font-size: 21px; line-height: 20px; margin-top: -2px; letter-spacing: -.5px; }
.smile { width: 38px; }
.hsep { width: 1px; height: 28px; background: #414d5c; flex: none; }
.hsep.first { margin-left: 21px; }
.services { display: flex; align-items: center; margin-left: 20px; width: 108px; }
.services span { margin-left: 11px; }
.search {
  width: 675px;
  height: 38px;
  background: #161b25;
  border: 1px solid #8d99a8;
  border-radius: 2px;
  display: flex;
  align-items: center;
  padding-left: 14px;
  font-size: 17px;
}
.q { margin-left: 10px; flex: 1; }
.searchx { margin-right: 12px; }
.headright { margin-left: auto; display: flex; align-items: center; padding-right: 14px; }
.hicon { width: 62px; display: flex; justify-content: center; }
.hmenu { display: flex; align-items: center; white-space: nowrap; }
.region { width: 131px; padding-left: 19px; }
.user { width: 186px; padding-left: 20px; }
.caret { display: inline-block; margin-left: 7px; border: 5px solid transparent; border-top: 8px solid #fff; border-bottom: 0; }
.favrow { height: 36px; display: flex; align-items: center; padding: 0 0 1px 24px; gap: 6px; font-size: 15px; }

.body { flex: 1; min-height: 0; display: flex; }
.side { width: 351px; flex: none; background: #fff; display: flex; border-right: 1px solid #d5dbdb; }
.sidecol { width: 333px; flex: none; }
.sidetitle {
  height: 69px;
  padding: 0 30px 2px 40px;
  display: flex;
  align-items: center;
  justify-content: space-between;
  border-bottom: 1px solid #eaeded;
}
.sidetitle h2 { margin: 0; font-size: 22px; font-weight: 700; color: #16191f; }
.nav li { height: 32.450px; line-height: 32.450px; padding-left: 40px; color: #414d5c; white-space: nowrap; }
.nav.top { margin-top: 16.500px; }
.nav li.sub { padding-left: 65px; }
.nav li.on { color: #0972d3; font-weight: 700; font-size: 16.500px; }
.group { display: flex; align-items: center; height: 32px; margin-top: 10px; margin-bottom: 1px; font-weight: 700; font-size: 16.500px; color: #414d5c; padding-left: 15px; white-space: nowrap; }
.g2 { margin-top: 11px; margin-bottom: 0; }
.g3 { margin-top: 11px; margin-bottom: 0; }
.group i { flex: none; }
.dn { height: 0; width: 14px; border: 7px solid transparent; border-top: 10px solid #545b64; border-bottom: 0; margin-right: 10px; }
.rt { height: 0; width: 10px; border-left: 10px solid #545b64; border-top: 7px solid transparent; border-bottom: 7px solid transparent; margin: 0 12px 0 2px; }
.siderule { height: 1px; margin: 19px 13px 0 40px; background: #eaeded; }
.whatsnew { display: flex; align-items: center; gap: 4px; height: 32px; margin-top: 16px; padding-left: 40px; color: #414d5c; }
.sidebar-scroll { flex: 1; display: flex; flex-direction: column; align-items: center; padding: 10px 2px 0 0; }
.up { flex: none; width: 0; height: 0; border: 7px solid transparent; border-bottom: 9px solid #8a8a8a; border-top: 0; }
.down { flex: none; width: 0; height: 0; border: 7px solid transparent; border-top: 9px solid #8a8a8a; border-bottom: 0; }
.track { flex: none; height: 763px; padding-top: 10px; width: 12px; }
.thumb { height: 612px; width: 12px; border-radius: 6px; background: #8a8a8a; }

.content { flex: 1; padding: 0 28px 0 28px; min-width: 0; background: #f2f3f3; }
.card { width: 1432px; background: #fff; box-shadow: 0 1px 2px rgba(0,28,36,.35); border-left: 1px solid #e3e6e6; padding-bottom: 1px; }
.cardtop { height: 47px; background: #fafafa; display: flex; align-items: center; border-bottom: 1px solid #eaeded; padding-left: 25px; padding-bottom: 12px; }
.filter {
  width: 810px;
  height: 33px;
  flex: none;
  background: #fff;
  border: 1px solid #7d8998;
  border-radius: 3px;
  display: flex;
  align-items: center;
  padding-left: 11px;
  color: #5f6b7a;
  font-style: italic;
  font-size: 17.700px;
}
.filter span { margin-left: 9px; }
.pager { margin-left: 430px; display: flex; align-items: center; width: 82px; justify-content: space-between; font-size: 17px; }
.pager b { color: #16191f; }
.prefs { margin-left: 16px; border-left: 1px solid #eaeded; padding-left: 15px; height: 34px; display: flex; align-items: center; color: #545b64; }
.grid-table { width: 1431px; border-collapse: collapse; table-layout: fixed; }
.grid-table th {
  height: 39px;
  background: #fafafa;
  text-align: left;
  color: #414d5c;
  font-weight: 700;
  font-size: 16.500px;
  padding: 0 19px 2px 20px;
  border-bottom: 1px solid #eaeded;
  position: relative;
}
.grid-table th:first-child, .grid-table td:first-child { padding-left: 25px; }
.grid-table th span { float: left; }
.grid-table th svg { float: right; margin-top: 6px; color: #545b64; }
.grid-table th + th::before { content: ""; position: absolute; left: 0; top: 8px; bottom: 8px; width: 1px; background: #879596; }
.grid-table td {
  height: 39.450px;
  padding: 0 20px;
  border-bottom: 1px solid #eaeded;
  color: #16191f;
  white-space: nowrap;
}
.grid-table tr:last-child td { border-bottom: 0; height: 40.500px; }
.toolspanel { flex: none; width: 52px; background: #fff; border-left: 1px solid #d5dbdb; padding: 11px 0 0 15px; }

.foot {
  height: 40px;
  flex: none;
  background: #232f3e;
  color: #fff;
  display: flex;
  align-items: center;
  justify-content: space-between;
  font-size: 14.400px;
  padding: 0 21px 0 21px;
  border-top: 1px solid #414d5c;
  white-space: nowrap;
}
.footleft { display: flex; align-items: center; gap: 6px; }
.fb { margin-left: 26px; }
.footright { display: flex; gap: 31px; }
.copy { margin-right: 5px; font-size: 14.600px; }

/* Right page scrollbar */
.pagebar { flex: none; width: 23px; height: 929px; background: #fff; border-radius: 8px 0 0 8px; margin-left: -3px; display: flex; flex-direction: column; align-items: center; padding-top: 10px; }
.pagetrack { flex: none; height: 893px; width: 11px; padding-top: 378px; }
.pagethumb { height: 494px; width: 11px; border-radius: 6px; background: #8a8a8a; }

/* Meet share bar */
.meet {
  position: absolute;
  left: 708px;
  top: 947px;
  width: 504px;
  height: 63px;
  display: flex;
  align-items: center;
  background: #202020;
  border: 1px solid #555;
  color: #e8eaed;
  font-family: "Open Sans", sans-serif;
  font-size: 14.200px;
  padding-left: 13px;
  white-space: nowrap;
}
.pause { width: 8px; height: 13px; border-left: 2px solid #c8c8c8; border-right: 2px solid #c8c8c8; margin-right: 11px; }
.stop { margin-left: 13px; width: 131px; height: 48px; border-radius: 24px; background: #a8c7fa; color: #1b3a6b; font-weight: 600; font-size: 15px; display: flex; align-items: center; justify-content: center; }
.hide { margin-left: 15px; color: #a8c7fa; text-decoration: underline; }

/* Windows taskbar */
.taskbar {
  flex: 1;
  display: flex;
  align-items: center;
  background: linear-gradient(90deg, #44121e 0%, #44121e 50%, #3a1a1f 72%, #231a1c 100%);
  border-top: 1px solid #5a2a33;
  color: #fff;
  font-family: "Open Sans", sans-serif;
  font-size: 14.500px;
  position: relative;
  padding-bottom: 2px;
}
.weather { width: 372px; display: flex; align-items: center; padding-left: 24px; position: relative; flex: none; }
.wbadge { position: absolute; left: 39px; top: -13px; width: 20px; height: 20px; border-radius: 50%; background: #ff9aa8; color: #3a0d12; font-size: 13px; text-align: center; line-height: 20px; }
.wtext { display: flex; flex-direction: column; margin-left: 8px; line-height: 20px; }
.center { display: flex; align-items: center; flex: none; }
.tsearch { margin-left: 18px; width: 125px; height: 40px; border-radius: 20px; background: #5a2c36; display: flex; align-items: center; justify-content: center; gap: 6px; color: #fff; margin-right: 4px; }
.ticon { width: 55px; height: 50px; display: flex; align-items: center; justify-content: center; position: relative; flex: none; }
.dot::after { content: ""; position: absolute; left: 25px; bottom: -1px; width: 5px; height: 5px; border-radius: 50%; background: #a09a9a; }
.activeapp { background: #5b3a40; border-radius: 6px; width: 50px; margin: 0 2.500px; }
.activeapp::after { content: ""; position: absolute; left: 15px; bottom: 0; width: 20px; height: 3px; border-radius: 2px; background: #c8c8c8; }
.tcount { position: absolute; right: 5px; top: 2px; width: 19px; height: 19px; border-radius: 50%; background: #9a9a9a; color: #222; font-size: 12px; text-align: center; line-height: 19px; }
.tcount.d { background: #7a5cc0; color: #fff; }
.rball { width: 30px; height: 30px; border-radius: 50%; background: #7aa7d8; color: #fff; text-align: center; line-height: 30px; font-family: "Liberation Serif", serif; font-size: 18px; }
.ks { width: 30px; height: 32px; background: #fff; border-radius: 5px; position: relative; display: block; }
.ks b { position: absolute; right: 3px; bottom: 1px; color: #333; font-size: 17px; line-height: 1; }
.tray { margin-left: auto; display: flex; align-items: center; padding-right: 26px; }
.chev { margin-right: 25px; }
.mic { margin-right: 21.500px; }
.wifi { margin-right: 11px; }
.vol { margin-right: 8px; }
.bat { margin-right: 20px; }
.clock { display: flex; flex-direction: column; align-items: flex-end; line-height: 24px; font-size: 14.500px; }
.tbell { margin: 0 0 0 10px; }
.copre { position: relative; margin-left: 20px; }
.copre b { position: absolute; left: 6px; top: 19px; background: #f5c518; color: #222; font-size: 9.500px; padding: 0 3px; border-radius: 2px; line-height: 13px; }
```
